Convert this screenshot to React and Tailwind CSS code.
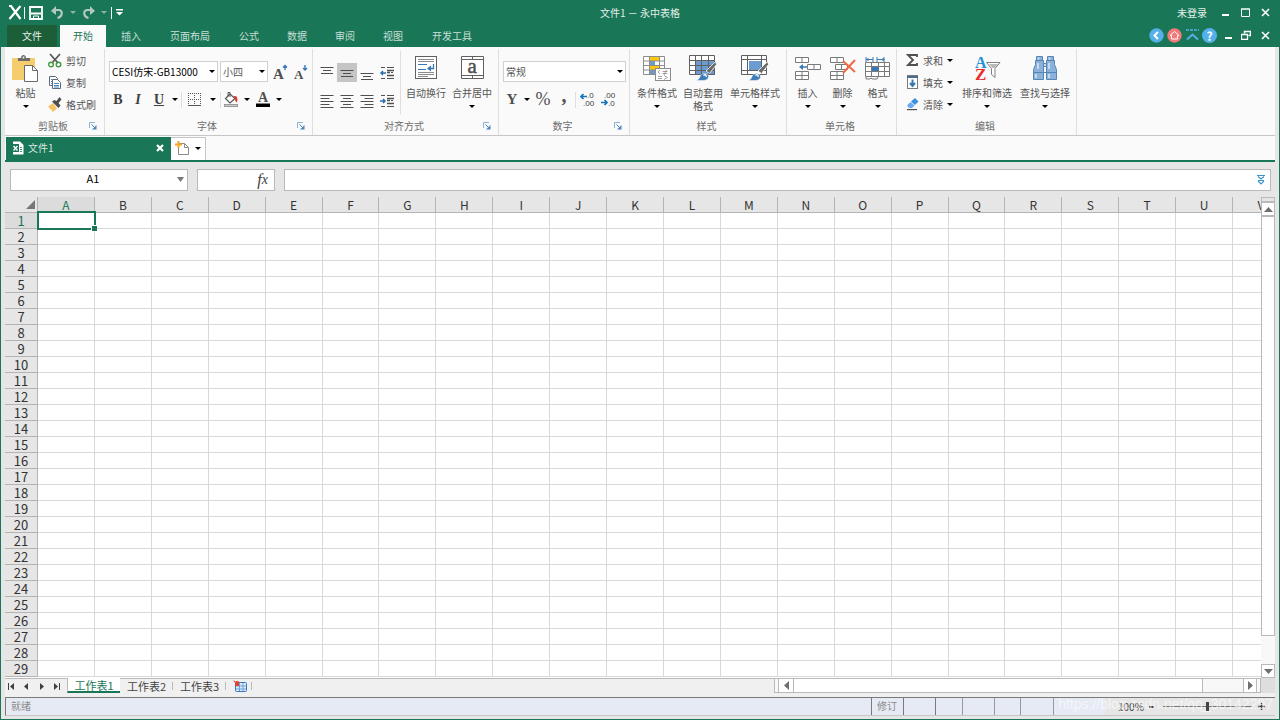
import { useState } from 'react'

const MENU_TABS = ['插入', '页面布局', '公式', '数据', '审阅', '视图', '开发工具']
const COLUMNS = 'ABCDEFGHIJKLMNOPQRSTUV'.split('')
const ROWS = Array.from({ length: 29 }, (_, i) => i + 1)
const SHEETS = ['工作表1', '工作表2', '工作表3']

const Caret = ({ className = 'text-black' }) => (
    <svg width="6" height="3" viewBox="0 0 6 3" className={`shrink-0 ${className}`}>
        <path d="M0 0h6L3 3z" fill="currentColor" />
    </svg>
)

const Triangle = ({ d }) => (
    <svg width="9" height="9" viewBox="0 0 9 9" className="text-[#6e6e6e]">
        <path d={d} fill="currentColor" />
    </svg>
)

/* ---------- Icons ---------- */

const PasteIcon = () => (
    <svg width="27" height="27" viewBox="0 0 27 27" fill="none">
        <rect x="0" y="3" width="23" height="22" rx="1" fill="#f5cd6c" />
        <path d="M6 6V3h3c0-4 5-4 5 0h4v3z" fill="#6b6b6b" />
        <circle cx="11.5" cy="2.6" r="1" fill="#fafafa" />
        <path d="M12.5 10.5h8l5 5v11h-13z" fill="#fff" stroke="#6b6b6b" />
        <path d="M20.5 10.5v5h5" stroke="#6b6b6b" />
    </svg>
)

const CutIcon = () => (
    <svg width="14" height="15" viewBox="0 0 14 15" fill="none">
        <path d="M2 1l8 9M12 1L4 10" stroke="#5a5a5a" strokeWidth="1.8" />
        <circle cx="3" cy="11.5" r="2.3" stroke="#3f9b3f" strokeWidth="1.4" />
        <circle cx="10.5" cy="11.5" r="2.3" stroke="#3f9b3f" strokeWidth="1.4" />
    </svg>
)

const CopyIcon = () => (
    <svg width="14" height="15" viewBox="0 0 14 15" fill="none">
        <path d="M1.5 1.5h6l2 2v7h-8z" fill="#fff" stroke="#5f6b7a" />
        <path d="M4.5 4.5h5l3 3v6h-8z" fill="#fff" stroke="#5f6b7a" />
        <path d="M6 8.500h5M6 10.5h5M6 12h5M3 4.5h1M3 6.5h1M3 8.5h1" stroke="#4a84c4" />
    </svg>
)

const BrushIcon = () => (
    <svg width="14" height="15" viewBox="0 0 14 15">
        <path d="M0 9.500L5 6l4 5.500L5 15z" fill="#f5c465" />
        <path d="M4 4.500l2.500-1.500 2 1L11.500 0 13.500 2.500 10.500 6l2 2.500-2 2.500z" fill="#4d4d4d" />
    </svg>
)

const FontSizeIcon = ({ up }) => (
    <svg width="15" height="16" viewBox="0 0 15 16" fill="none">
        <text x="0" y="15" fontSize={up ? 15 : 13} fontWeight="bold" fill="#505050" className="font-['Liberation_Serif',serif]">A</text>
        <path d={up ? 'M12 6V1.500M10 3.500l2-2 2 2' : 'M11 1v5M9 4l2 2 2-2'} stroke="#3a78b5" strokeWidth="1.4" />
    </svg>
)

const BorderIcon = () => (
    <svg width="13" height="13" viewBox="0 0 13 13" fill="none" stroke="#555">
        <path d="M.5 0v12M6.5 0v12M12.5 0v12M0 .5h13M0 6.5h13" strokeDasharray="1 1" />
        <path d="M0 12.5h13" />
    </svg>
)

const FillIcon = () => (
    <svg width="15" height="15" viewBox="0 0 15 15" fill="none">
        <path d="M1.500 6.500L6 2l5 4.500-5 4.500z" fill="#fff" stroke="#555" strokeWidth="1.2" />
        <path d="M4 4.500V.5h2V5" stroke="#555" />
        <path d="M9.500 4c4-.5 4.500 2 3.500 6.500-1.500-.5-2.500-3-2-4.500z" fill="#e23b32" />
        <rect x=".5" y="12.5" width="13" height="2" fill="#ccc" stroke="#999" />
    </svg>
)

const FontColorIcon = () => (
    <svg width="15" height="15" viewBox="0 0 15 15">
        <text x="2" y="10" fontSize="14" fontWeight="bold" fill="#505050" className="font-['Liberation_Serif',serif]">A</text>
        <rect y="11.500" width="14" height="3.500" fill="#000" />
    </svg>
)

const LinesIcon = ({ d }) => (
    <svg width="14" height="14" viewBox="0 0 14 14" fill="none" stroke="#505050">
        <path d={d} />
    </svg>
)

const IndentIcon = ({ right }) => (
    <svg width="15" height="14" viewBox="0 0 15 14" fill="none">
        <path d="M1 1.5h4M7 1.5h7M1 12.5h4M7 12.5h7M11 6.5h2" stroke="#505050" />
        <path d="M7 4.500h7M7 6.5h3M7 9.500h7" stroke="#505050" strokeWidth="1.6" />
        <path d={right ? 'M0 7h5M3 5l2 2-2 2' : 'M6 7H1M3 5L1 7l2 2'} stroke="#2d6db0" strokeWidth="1.5" />
    </svg>
)

const WrapIcon = () => (
    <svg width="22" height="24" viewBox="0 0 22 24" fill="none">
        <rect x=".5" y=".5" width="21" height="22" fill="#fff" stroke="#606060" />
        <path d="M3 3.5h16M3 5.5h16M3 16.5h16M3 18.5h16M3 20.5h10" stroke="#8a8a8a" />
        <path d="M3 8.5h9M3 13.5h8" stroke="#3a78b5" />
        <path d="M18.5 8v4.5h-5" stroke="#3a78b5" strokeWidth="1.3" />
        <path d="M16 9.5v6l-4-3z" fill="#3a78b5" />
    </svg>
)

const MergeIcon = () => (
    <svg width="23" height="24" viewBox="0 0 23 24" fill="none">
        <path d="M.5.5h22v22H.5zM.5 3.5h22M.5 19.5h22M11.5.5v3M11.5 19.5v3" fill="#fff" stroke="#606060" />
        <text x="6.5" y="17" fontSize="21" fill="#505050" stroke="#505050" strokeWidth=".5" className="font-['Liberation_Serif',serif]">a</text>
    </svg>
)

const DecimalIcon = ({ more }) => (
    <svg width="15" height="15" viewBox="0 0 15 15" fill="none">
        <text x={more ? 7 : 3} y="6" fontSize="8" fill="#404040" className="font-['Liberation_Sans',sans-serif]">{more ? '.0' : '.00'}</text>
        <text x={more ? 3 : 7} y="14" fontSize="8" fill="#404040" className="font-['Liberation_Sans',sans-serif]">{more ? '.00' : '.0'}</text>
        <path d={more ? 'M7 4.500H1M3.500 2L1 4.500 3.500 7' : 'M0 10.500h6M3.500 8L6 10.500 3.500 13'} stroke="#1673b8" strokeWidth="1.7" />
    </svg>
)

const ConditionIcon = () => (
    <svg width="28" height="27" viewBox="0 0 28 27" fill="none">
        <rect x=".5" y="1.5" width="22" height="18" fill="#fff" />
        <path d="M6 2h11v4H6zM6 11h10v4H6z" fill="#fcc80f" />
        <path d="M6 6h6v5H6zM6 15h6v4H6z" fill="#6b9bc9" />
        <path d="M.5 1.5h21v18H.5zM.5 6h21M.5 10.5h21M.5 15h21M6.5 1.5v18M16.5 1.5v18" stroke="#8c8c8c" />
        <rect x="12.5" y="13.5" width="15" height="12" fill="#fff" stroke="#8c8c8c" />
        <path d="M17 15l-2 2 2 2M19.5 16.5h5M19.5 18.5h5M23.5 15L21 20M15 21.5h4M15 23.5h4M21 20.500l3.500 2-3.500 2" stroke="#8c8c8c" strokeWidth=".8" />
    </svg>
)

const StyleBrush = () => (
    <>
        <path d="M26.500 6.500l1 3-7 9-3.500-2.500z" fill="#6b6b6b" stroke="#fafafa" strokeWidth=".8" />
        <path d="M7 25.500c4-1 3-3.500 5.500-6 2.500-2 6.500-1 7 1.500.5 3-2.500 4.500-5.500 4.500z" fill="#3f7db8" stroke="#fafafa" strokeWidth=".5" />
        <path d="M14.500 20.500c1-1.500 3.500-.5 2.500 1.500" stroke="#fff" strokeWidth="1.3" />
    </>
)

const AutoFormatIcon = () => (
    <svg width="29" height="27" viewBox="0 0 29 27" fill="none">
        <path d="M.5.5h25v19H.5z" fill="#fff" />
        <path d="M7 6h19v14H7z" fill="#6b9bd0" />
        <path d="M.5.5h25v19H.5zM.5 5.5h25M.5 10.5h25M.5 15.5h25M6.500.5v19M12.500.5v19M19.500.5v19" stroke="#606060" />
        <StyleBrush />
    </svg>
)

const CellStyleIcon = () => (
    <svg width="29" height="27" viewBox="0 0 29 27" fill="none">
        <path d="M.5.5h25v19H.5z" fill="#fff" />
        <path d="M.5.5h25v19H.5zM.5 4.5h25M.5 15.5h25M6.500.5v19M20.500.5v19" stroke="#606060" />
        <path d="M8 6h12v9H8z" fill="#6b9bd0" />
        <StyleBrush />
    </svg>
)

const InsertIcon = () => (
    <svg width="26" height="25" viewBox="0 0 26 25" fill="none">
        <path d="M.5 1.5h13v5H.5zM7 1.5v5M12.5 8.5h13v5h-13zM19 8.5v5M.5 15.5h13v8H.5zM7 15.5v8M.5 19.5h13" fill="#fff" stroke="#7a7a7a" />
        <path d="M12 11H6" stroke="#3a78b5" strokeWidth="1.5" />
        <path d="M8 8v6l-4-3z" fill="#3a78b5" />
    </svg>
)

const DeleteIcon = () => (
    <svg width="26" height="25" viewBox="0 0 26 25" fill="none">
        <path d="M.5 1.5h13v5H.5zM7 1.5v5M5.5 8.5h12v5h-12zM11.5 8.5v5M.5 15.5h13v8H.5zM7 15.5v8M.5 19.5h13" fill="#fff" stroke="#7a7a7a" />
        <path d="M13 5l12 11M25 4L13 17" stroke="#f26a45" strokeWidth="2" />
    </svg>
)

const FormatIcon = () => (
    <svg width="26" height="25" viewBox="0 0 26 25" fill="none">
        <path d="M1 1v5M8 1v5M12 1v5M19 1v5M1 3.5h7M12 3.5h7M3.500 2L2 3.500 3.500 5M17.500 2L19 3.500 17.500 5" stroke="#3a78b5" />
        <path d="M.5 6.5h24v14H.5zM.5 10.5h24M.5 15.5h24M6.5 6.5v14M13.5 6.5v14M19.5 6.5v14" fill="#fff" stroke="#7a7a7a" />
        <path d="M7 11h6.500v4H7z" fill="#3a78b5" />
        <path d="M1 21v2h4l1-1 1 1h5l1-2" stroke="#7a7a7a" />
    </svg>
)

const SumIcon = () => (
    <svg width="13" height="14" viewBox="0 0 13 14" fill="none">
        <path d="M11 4V2H2l5 5-5 5h9v-2" stroke="#505050" strokeWidth="1.8" />
    </svg>
)

const FillDownIcon = () => (
    <svg width="13" height="14" viewBox="0 0 13 14" fill="none">
        <rect x="1.5" y=".5" width="10" height="13" fill="#fff" stroke="#7a7a7a" />
        <path d="M1 2h11" stroke="#4b6b8a" strokeWidth="2" />
        <path d="M6.5 4.5V10M4 8l2.500 3L9 8" stroke="#3a78b5" strokeWidth="2" />
    </svg>
)

const EraserIcon = () => (
    <svg width="13" height="14" viewBox="0 0 13 14">
        <path d="M9 1l3.500 3.500L9 8 5 4.500z" fill="#3f8fe0" />
        <path d="M4.500 5L8.500 8.500 6 11H3L1 8.500z" fill="#6aaaf0" />
        <path d="M1 12h10v1.200H1z" fill="#505050" />
    </svg>
)

const SortFilterIcon = () => (
    <svg width="27" height="26" viewBox="0 0 27 26" fill="none">
        <text x="1" y="13" fontSize="16" fontWeight="bold" fill="#2290d8" className="font-['Liberation_Serif',serif]">A</text>
        <text x="1" y="25" fontSize="17" fontWeight="bold" fill="#ee2b2b" className="font-['Liberation_Serif',serif]">Z</text>
        <path d="M12.5 7.5h13.500l-5 6v9l-3.500-3v-6z" fill="#fff" stroke="#808080" />
        <path d="M15 9h9l-3.500 4h-2z" fill="#b9b9b9" />
    </svg>
)

const BinocularsIcon = () => (
    <svg width="24" height="25" viewBox="0 0 24 25" stroke="#5585b5">
        <path d="M3.5.5h6v4h1v19H.5v-10l2-5v-4h1zM14.5.5h6v4h1v4l2 5v10h-10v-19h1z" fill="#8db2da" />
        <path d="M10.5 7.500h3v3h-3zM10.5 16.500h3" fill="#cfe0f2" />
        <path d="M3 4.500h7M14 4.500h7M1 16.500h9M14 16.500h9" />
        <path d="M3 18v4M16 18v4M5 7v6M16 7v6M5.500 1.500v2M16.500 1.500v2" stroke="#d8e7f7" strokeWidth="1.5" />
    </svg>
)

/* ---------- Ribbon parts ---------- */

const Group = ({ label, width, launcher, children }) => (
    <section aria-label={label} className={`flex shrink-0 flex-col ${width}`}>
        <div className="flex min-h-0 flex-1 border-r border-[#dedede]">{children}</div>
        <div className="flex h-[19px] items-center border-r border-[#dedede] pr-[7px] text-[#6d6d6d]">
            <span className="flex-1 pl-3 text-center">{label}</span>
            {launcher ? (
                <button aria-label={`${label}设置`} className="text-[#4a84c4]">
                    <svg width="8" height="8" viewBox="0 0 8 8" fill="none">
                        <path d="M.5 6V.5H6" stroke="#8fb2d6" />
                        <path d="M2.500 2.500l3 3" stroke="currentColor" />
                        <path d="M7.500 3v4.500H3z" fill="currentColor" />
                    </svg>
                </button>
            ) : <span className="w-2" />}
        </div>
    </section>
)

const BigButton = ({ icon, label, second, width, caret = true }) => (
    <button className={`flex shrink-0 flex-col items-center justify-start pt-[5px] ${width}`}>
        <span className="flex h-7 items-center justify-center">{icon}</span>
        <span className="mt-1 whitespace-nowrap leading-[13px]">{label}</span>
        {second && <span className="leading-[13px]">{second}</span>}
        {!second && caret && <span className="flex h-3.5 items-center"><Caret /></span>}
    </button>
)

const SmallButton = ({ icon, label, caret }) => (
    <button className="flex h-[22px] items-center gap-1 whitespace-nowrap">
        {icon}
        {label}
        {caret && <Caret />}
    </button>
)

const Combo = ({ label, value, className, text = '' }) => (
    <div className={`relative ${className}`}>
        <select aria-label={label} className={`block h-[21px] w-full appearance-none border border-[#d0d0d0] bg-white pl-0.5 pr-2 ${text}`}>
            <option>{value}</option>
        </select>
        <span className="pointer-events-none absolute right-[3px] top-[9px]"><Caret /></span>
    </div>
)

const IconButton = ({ label, children, className = 'w-5' }) => (
    <button aria-label={label} className={`flex h-[19px] shrink-0 items-center justify-center ${className}`}>
        {children}
    </button>
)

const Divider = () => <span className="h-4 w-px shrink-0 bg-[#dedede]" />

const Ribbon = () => (
    <div className="flex h-[89px] shrink-0 overflow-hidden border-b border-[#c6c6c6] bg-[#fafafa] pt-0.5 text-[#555]">
        <Group label="剪贴板" width="w-[100px]" launcher>
            <BigButton icon={<PasteIcon />} label="粘贴" width="w-[41px]" />
            <div className="ml-0.5 flex flex-col">
                <SmallButton icon={<CutIcon />} label="剪切" />
                <SmallButton icon={<CopyIcon />} label="复制" />
                <SmallButton icon={<BrushIcon />} label="格式刷" />
            </div>
        </Group>

        <Group label="字体" width="w-52" launcher>
            <div className="flex flex-col pl-1 pt-3">
                <div className="flex items-center gap-0.5">
                    <Combo label="字体" value="CESI仿宋-GB13000" className="w-[109px]" text="text-black" />
                    <Combo label="字号" value="小四" className="w-12" />
                    <IconButton label="增大字号"><FontSizeIcon up /></IconButton>
                    <IconButton label="减小字号" className="w-[18px]"><FontSizeIcon /></IconButton>
                </div>
                <div className="mt-2 flex items-center font-['Liberation_Serif',serif] text-[14px] text-[#404040]">
                    <IconButton label="加粗" className="w-[18px]"><b>B</b></IconButton>
                    <IconButton label="倾斜" className="w-[22px]"><i className="font-semibold">I</i></IconButton>
                    <IconButton label="下划线"><span className="font-bold underline">U</span></IconButton>
                    <IconButton label="下划线样式" className="w-3"><Caret /></IconButton>
                    <Divider />
                    <IconButton label="边框" className="w-6"><BorderIcon /></IconButton>
                    <IconButton label="边框样式" className="w-3.5"><Caret /></IconButton>
                    <Divider />
                    <IconButton label="填充颜色"><FillIcon /></IconButton>
                    <IconButton label="选择填充颜色" className="w-3"><Caret /></IconButton>
                    <IconButton label="字体颜色"><FontColorIcon /></IconButton>
                    <IconButton label="选择字体颜色" className="w-3"><Caret /></IconButton>
                </div>
            </div>
        </Group>

        <Group label="对齐方式" width="w-[186px]" launcher>
            <div className="my-0.5 flex flex-col gap-[9px] border-r border-[#dedede] pl-1 pr-[3px] pt-3">
                <div className="flex">
                    <IconButton label="顶端对齐"><LinesIcon d="M.5 1.5h13M3 4.5h8M1 7.5h12" /></IconButton>
                    <IconButton label="垂直居中" className="w-5 bg-[#c5c5c5]"><LinesIcon d="M.5 4.5h13M3 7.5h8M1 10.5h12" /></IconButton>
                    <IconButton label="底端对齐"><LinesIcon d="M.5 7.5h13M3 10.5h8M1 13.5h12" /></IconButton>
                    <IconButton label="减少缩进"><IndentIcon /></IconButton>
                </div>
                <div className="flex">
                    <IconButton label="左对齐"><LinesIcon d="M.5 1.5h13M.5 4.5h9M.5 7.5h13M.5 10.5h9M.5 13.5h13" /></IconButton>
                    <IconButton label="居中"><LinesIcon d="M.5 1.5h13M3 4.5h8M.5 7.5h13M3 10.5h8M.5 13.5h13" /></IconButton>
                    <IconButton label="右对齐"><LinesIcon d="M.5 1.5h13M4.5 4.5h9M.5 7.5h13M4.5 10.5h9M.5 13.5h13" /></IconButton>
                    <IconButton label="增加缩进"><IndentIcon right /></IconButton>
                </div>
            </div>
            <BigButton icon={<WrapIcon />} label="自动换行" width="w-[50px]" caret={false} />
            <BigButton icon={<MergeIcon />} label="合并居中" width="w-[42px]" />
        </Group>

        <Group label="数字" width="w-[131px]" launcher>
            <div className="flex flex-1 flex-col pl-1 pr-[3px] pt-3">
                <Combo label="数字格式" value="常规" className="w-full" />
                <div className="mt-2 flex items-center font-['Liberation_Serif',serif] text-[#505050]">
                    <IconButton label="货币" className="w-[18px] text-[15px] font-bold">Y</IconButton>
                    <IconButton label="货币样式" className="w-3"><Caret /></IconButton>
                    <IconButton label="百分比" className="w-5 text-[18px]">%</IconButton>
                    <IconButton label="千位分隔" className="w-[22px] text-[20px] font-bold"><span className="pb-2">,</span></IconButton>
                    <Divider />
                    <IconButton label="增加小数位" className="w-[22px]"><DecimalIcon more /></IconButton>
                    <IconButton label="减少小数位"><DecimalIcon /></IconButton>
                </div>
            </div>
        </Group>

        <Group label="样式" width="w-[157px]">
            <div className="flex pl-1">
                <BigButton icon={<ConditionIcon />} label="条件格式" width="w-[46px]" />
                <BigButton icon={<AutoFormatIcon />} label="自动套用" second="格式" width="w-[46px]" />
                <BigButton icon={<CellStyleIcon />} label="单元格样式" width="w-[58px]" />
            </div>
        </Group>

        <Group label="单元格" width="w-[110px]">
            <div className="flex pl-[3px]">
                <BigButton icon={<InsertIcon />} label="插入" width="w-[35px]" />
                <BigButton icon={<DeleteIcon />} label="删除" width="w-[35px]" />
                <BigButton icon={<FormatIcon />} label="格式" width="w-[35px]" />
            </div>
        </Group>

        <Group label="编辑" width="w-[180px]">
            <div className="flex w-[61px] shrink-0 flex-col pl-[9px]">
                <SmallButton icon={<SumIcon />} label="求和" caret />
                <SmallButton icon={<FillDownIcon />} label="填充" caret />
                <SmallButton icon={<EraserIcon />} label="清除" caret />
            </div>
            <BigButton icon={<SortFilterIcon />} label="排序和筛选" width="w-[58px]" />
            <BigButton icon={<BinocularsIcon />} label="查找与选择" width="w-[58px]" />
        </Group>
    </div>
)

/* ---------- Title bar and menu ---------- */

const MinimizeIcon = () => (
    <svg width="9" height="9" viewBox="0 0 9 9"><path d="M1 6h7v2H1z" fill="#fff" /></svg>
)

const CloseIcon = () => (
    <svg width="9" height="9" viewBox="0 0 9 9"><path d="M1 1l7 7M8 1L1 8" stroke="#fff" strokeWidth="1.6" /></svg>
)

const TitleBar = () => (
    <div className="relative flex h-[25px] items-center pl-2 pr-2.5 text-[#e4f0eb]">
        <svg width="14" height="15" viewBox="0 0 14 15" fill="none" stroke="#fff">
            <path d="M1 1h2l9.500 13M12.500 1L1.500 14" strokeWidth="2.2" />
        </svg>
        <span className="ml-0.5 h-3 w-px bg-white" />
        <button aria-label="保存" className="ml-1">
            <svg width="14" height="14" viewBox="0 0 14 14" fill="none">
                <path d="M1 1h12v12H1z" stroke="#fff" strokeWidth="1.8" />
                <path d="M2 7.500h10" stroke="#fff" strokeWidth="2" />
                <path d="M4.500 13v-3h5v3" stroke="#fff" />
            </svg>
        </button>
        <button aria-label="撤销" className="ml-2">
            <svg width="13" height="13" viewBox="0 0 13 13" fill="none">
                <path d="M3 4h4.500c4.500 0 4.500 6.500-1 8" stroke="#b4c7c0" strokeWidth="2.2" />
                <path d="M0 5l5-5v9z" fill="#b4c7c0" />
            </svg>
        </button>
        <button aria-label="撤销列表" className="ml-1.5"><Caret className="text-[#8fb0a4]" /></button>
        <button aria-label="恢复" className="ml-1.5">
            <svg width="13" height="13" viewBox="0 0 13 13" fill="none">
                <path d="M10 4H5.500C1 4 1 10.500 6.500 12" stroke="#b4c7c0" strokeWidth="2.2" />
                <path d="M13 5L8 0v9z" fill="#b4c7c0" />
            </svg>
        </button>
        <button aria-label="恢复列表" className="ml-1.5"><Caret className="text-[#8fb0a4]" /></button>
        <span className="ml-1 h-3 w-px bg-white" />
        <button aria-label="自定义快速访问工具栏" className="ml-1 text-white">
            <svg width="7" height="7" viewBox="0 0 7 7" fill="currentColor"><path d="M0 0h7v1.500H0zM0 3h7L3.500 6.500z" /></svg>
        </button>
        <h1 className="absolute inset-x-24 text-center">文件1 － 永中表格</h1>
        <button className="relative ml-auto">未登录</button>
        <button aria-label="最小化" className="ml-3.5"><MinimizeIcon /></button>
        <button aria-label="最大化" className="ml-[11px]">
            <svg width="9" height="9" viewBox="0 0 9 9" fill="none"><path d="M.5 1h8v7.500h-8zM0 1h9" stroke="#fff" /></svg>
        </button>
        <button aria-label="关闭" className="ml-[11px]"><CloseIcon /></button>
    </div>
)

const MenuBar = () => (
    <nav className="flex h-[22px] items-center pl-[7px] pr-2.5 text-[#c8dfd6]">
        <button className="h-full w-[50px] bg-[#1c5e37] pb-0.5 text-[#e4f0eb]">文件</button>
        <button className="ml-[3px] mr-px h-full w-[46px] bg-[#fafafa] pb-0.5 text-[#197656]">开始</button>
        {MENU_TABS.map((tab) => (
            <button key={tab} className={`h-full pb-0.5 text-center ${tab.length > 2 ? 'w-[70px]' : 'w-12'}`}>{tab}</button>
        ))}
        <div className="ml-auto flex items-center pb-0.5">
            <button aria-label="返回">
                <svg width="15" height="15" viewBox="0 0 15 15" fill="none">
                    <circle cx="7.5" cy="7.5" r="7.2" fill="#55b0ea" />
                    <path d="M9 4L5.500 7.500 9 11" stroke="#fff" strokeWidth="2" />
                </svg>
            </button>
            <button aria-label="主页" className="ml-[3px]">
                <svg width="15" height="15" viewBox="0 0 15 15" fill="none">
                    <circle cx="7.5" cy="7.5" r="7.2" fill="#f5797b" />
                    <path d="M3 7.500l4.500-4 4.500 4h-1.500V11h-6V7.500z" stroke="#fff" />
                </svg>
            </button>
            <button aria-label="折叠功能区" className="ml-1">
                <svg width="13" height="12" viewBox="0 0 13 12" fill="none" stroke="#55b0ea">
                    <path d="M0 1h13" strokeWidth="1.5" strokeDasharray="3 1" />
                    <path d="M1 10.500L6.500 5.500l5.500 5" strokeWidth="2" />
                </svg>
            </button>
            <button aria-label="帮助" className="ml-[3px] size-[15px] rounded-full bg-[#55b0ea] text-[12px] font-bold leading-[15px] text-white">?</button>
            <button aria-label="最小化文档" className="ml-[7px]"><MinimizeIcon /></button>
            <button aria-label="还原文档" className="ml-2">
                <svg width="10" height="10" viewBox="0 0 10 10" fill="none" stroke="#fff">
                    <path d="M3.500 3.500v-2h6v4h-2" strokeWidth="1.5" />
                    <path d="M.5 4.500h6v5h-6z" strokeWidth="1.3" />
                </svg>
            </button>
            <button aria-label="关闭文档" className="ml-2.5"><CloseIcon /></button>
        </div>
    </nav>
)

/* ---------- Document tab and formula bar ---------- */

const DocumentTabs = () => (
    <div className="flex h-[26px] shrink-0 items-stretch border-b-2 border-[#197656] bg-[#fafafa] pl-px pt-px">
        <div className="flex w-[165px] items-center bg-[#197656] pl-1.5 pr-[7px] pb-0.5 text-[#d8e8e2]">
            <svg width="12" height="14" viewBox="0 0 12 14" fill="none">
                <path d="M1 .5h7l3.500 3.500v9.500H1z" fill="#fff" />
                <path d="M0 3h7v8H0z" fill="#197656" />
                <path d="M1.500 5l4 4.500M5.500 5l-4 4.500" stroke="#fff" strokeWidth="1.4" />
                <path d="M8 6.500h2M8 8.500h2M8 10.500h2" stroke="#197656" strokeWidth=".8" />
            </svg>
            <span className="ml-1">文件1</span>
            <button aria-label="关闭文件1" className="ml-auto">
                <svg width="8" height="8" viewBox="0 0 8 8"><path d="M1 1l6 6M7 1L1 7" stroke="#fff" strokeWidth="2.2" /></svg>
            </button>
        </div>
        <button aria-label="新建文件" className="flex w-[35px] items-center justify-between border border-l-0 border-b-0 border-[#c6c6c6] bg-white px-1 pb-0.5">
            <svg width="15" height="15" viewBox="0 0 15 15" fill="none">
                <path d="M3.5 2.5h6l4 4v7h-10z" fill="#fff" stroke="#8a8a8a" />
                <path d="M9.5 2.5v4h4" stroke="#8a8a8a" />
                <path d="M3.5 0v7M0 3.5h7" stroke="#f5a623" strokeWidth="2" />
            </svg>
            <Caret />
        </button>
    </div>
)

const FormulaBar = () => (
    <div className="flex h-[35px] shrink-0 items-center bg-[#e6e6e6] pl-[5px] pr-1">
        <div className="relative w-[178px]">
            <input aria-label="名称框" defaultValue="A1" className="block h-[22px] w-full border border-[#b9b9b9] bg-white pb-1 pr-3 text-center text-[11px] text-black" />
            <button aria-label="名称列表" className="absolute right-1 top-2">
                <svg width="7" height="5" viewBox="0 0 7 5"><path d="M0 0h7L3.500 5z" fill="#777" /></svg>
            </button>
        </div>
        <button aria-label="插入函数" className="ml-[9px] flex h-[22px] w-[78px] items-center justify-end border border-[#b9b9b9] bg-white pr-1.5 font-['Liberation_Serif',serif] text-[16px] italic text-[#404040]">
            f<span className="text-[14px]">x</span>
        </button>
        <div className="relative ml-[9px] flex-1">
            <input aria-label="编辑栏" className="block h-[22px] w-full border border-[#b9b9b9] bg-white px-1 text-[11px]" />
            <button aria-label="展开编辑栏" className="absolute right-1.5 top-1.5">
                <svg width="8" height="10" viewBox="0 0 8 10" fill="none" stroke="#3f95c9">
                    <path d="M0 .5h8M1 1.500l3 2.500 3-2.500" strokeWidth="1.2" />
                    <path d="M1 5.500h6M1 6l3 3 3-3" strokeWidth="1.2" />
                </svg>
            </button>
        </div>
    </div>
)

/* ---------- Grid ---------- */

const SheetGrid = () => (
    <div className="min-w-0 flex-1 overflow-hidden bg-white">
        <table className="w-full min-w-[1285px] table-fixed border-separate border-spacing-0 text-[13px] leading-[15px] text-[#333]">
            <thead>
                <tr className="h-4">
                    <th className="h-4 w-[33px] border-b border-r border-[#b4b4b4] bg-[#e6e6e6] p-0">
                        <svg width="9" height="9" viewBox="0 0 9 9" className="ml-auto mr-0.5"><path d="M9 0v9H0z" fill="#777" /></svg>
                    </th>
                    {COLUMNS.map((col) => (
                        <th
                            key={col}
                            scope="col"
                            className={`h-4 border-b border-r border-[#b4b4b4] p-0 text-[12px] font-normal ${col === 'A' ? 'bg-[#dcdcdc] text-[#197656]' : 'bg-[#e6e6e6]'}`}
                        >
                            {col}
                        </th>
                    ))}
                </tr>
            </thead>
            <tbody>
                {ROWS.map((row) => (
                    <tr key={row} className="h-4">
                        <th
                            scope="row"
                            className={`h-4 border-b border-r border-[#b4b4b4] p-0 font-normal ${row === 1 ? 'bg-[#dcdcdc] text-[#197656]' : 'bg-[#e6e6e6]'}`}
                        >
                            {row}
                        </th>
                        {COLUMNS.map((col) => (
                            <td key={col} className="relative h-4 border-b border-r border-[#d9d9d9] p-0">
                                {row === 1 && col === 'A' && (
                                    <div className="absolute -bottom-0.5 -left-px -right-0.5 -top-0.5 z-10 border-2 border-[#197656]">
                                        <span className="absolute -bottom-[3px] -right-[3px] size-[6px] border-l border-t border-white bg-[#197656]" />
                                    </div>
                                )}
                            </td>
                        ))}
                    </tr>
                ))}
            </tbody>
        </table>
    </div>
)

const VerticalScroll = () => (
    <div className="flex w-3.5 shrink-0 flex-col bg-[#f8f8f8]">
        <div className="h-[5px] shrink-0 border border-[#b9b9b9] bg-[#e6e6e6]" />
        <button aria-label="向上滚动" className="flex h-[14px] shrink-0 items-center justify-center border border-[#b9b9b9] bg-white"><Triangle d="M0 7h9L4.500 2z" /></button>
        <div className="flex-[420] border border-[#b9b9b9] bg-white" />
        <div className="flex-[28]" />
        <button aria-label="向下滚动" className="flex h-[14px] shrink-0 items-center justify-center border border-[#b9b9b9] bg-white"><Triangle d="M0 2h9L4.500 7z" /></button>
    </div>
)

const SHEET_NAV = [
    ['第一张', 'M1 1h1v7H1zM7 1v7L3 4.500z'],
    ['上一张', 'M6 1v7L2 4.500z'],
    ['下一张', 'M3 1v7l4-3.500z'],
    ['最后一张', 'M2 1v7l4-3.500zM7 1h1v7H7z'],
]

const SheetBar = ({ active, onSelect }) => (
    <div className="flex h-[19px] shrink-0 items-start bg-[#f0f0f0] text-[#444]">
        <div className="flex h-[15px] w-[62px] shrink-0 items-center justify-between border-t border-[#b9b9b9] pl-0.5 pr-1.5">
            {SHEET_NAV.map(([label, d]) => (
                <button key={label} aria-label={label}>
                    <svg width="9" height="9" viewBox="0 0 9 9"><path d={d} fill="#404040" /></svg>
                </button>
            ))}
        </div>
        {SHEETS.map((sheet) => (
            <button
                key={sheet}
                onClick={() => onSelect(sheet)}
                className={sheet === active
                    ? 'h-[15px] w-[53px] shrink-0 border-b-2 border-l border-b-[#197656] border-l-[#b9b9b9] bg-white text-[11px] leading-[12px] text-[#197656]'
                    : 'flex h-[15px] w-[53px] shrink-0 items-center justify-between border-t border-[#b9b9b9] pl-[7px] text-[11px] leading-[12px]'}
            >
                {sheet}
                {sheet !== active && <span className="h-2 w-px bg-[#b9b9b9]" />}
            </button>
        ))}
        <div className="flex h-[15px] flex-1 items-center gap-1 border-t border-[#b9b9b9] pl-[7px]">
            <button aria-label="插入工作表">
                <svg width="14" height="12" viewBox="0 0 14 12" fill="none">
                    <rect x="2.5" y="2.5" width="11" height="9" rx="1" fill="#dcebfa" stroke="#3a78c0" />
                    <path d="M3 6h10M3 9h10M6.5 3v8M10 3v8" stroke="#6fa0d8" />
                    <path d="M0 0l2.500 1.500L4 1l2 .500V6H1.500L3 4.500z" fill="#e8402c" />
                </svg>
            </button>
            <span className="h-2 w-px bg-[#b9b9b9]" />
        </div>
        <div className="flex h-[15px] w-[487px] shrink-0 border-y border-[#b9b9b9] bg-[#f8f8f8]">
            <div className="w-[5px] border-x border-[#b9b9b9]" />
            <button aria-label="向左滚动" className="flex w-3.5 items-center justify-center bg-white"><Triangle d="M7 0v9L2 4.500z" /></button>
            <div className="flex-[410] border-x border-[#b9b9b9] bg-white" />
            <div className="flex-[40]" />
            <button aria-label="向右滚动" className="flex w-3.5 items-center justify-center border-x border-[#b9b9b9] bg-white"><Triangle d="M2 0v9l5-4.500z" /></button>
            <div className="w-1 border-r border-[#b9b9b9]" />
        </div>
        <div className="h-[15px] w-3.5 shrink-0 bg-[#dedede]" />
    </div>
)

const StatusBar = () => (
    <footer className="relative flex h-[19px] shrink-0 items-stretch border-b border-l border-t border-b-[#c6c6c6] border-l-[#7a7a7a] border-t-[#7a7a7a] bg-[#e6eaf4] text-[#8a8a8a]">
        <span className="flex-1 pl-[5px] leading-[15px]">就绪</span>
        <span className="w-8 border-l border-[#7a7a7a] pl-[5px] leading-[15px]">修订</span>
        <span className="w-8 border-l border-[#7a7a7a]" />
        <span className="w-[27px] border-l border-[#7a7a7a]" />
        <span className="w-8 border-l border-[#9a9a9a]" />
        <span className="w-[26px] border-l border-[#9a9a9a]" />
        <span className="w-[33px] border-l border-[#9a9a9a]" />
        <span className="w-[52px] border-l border-[#9a9a9a]" />
        <div className="flex w-[170px] items-center bg-[#e6e6e6] pl-[13px] pr-2.5 text-[#444]">
            <span className="w-[31px]">100%</span>
            <button aria-label="缩小" className="flex h-full w-2 items-center">
                <svg width="5" height="2" viewBox="0 0 5 2"><path d="M0 0h5v2H0z" fill="#444" /></svg>
            </button>
            <input
                type="range"
                aria-label="显示比例"
                defaultValue="50"
                className="mx-1.5 h-3 min-w-0 flex-1 appearance-none bg-transparent [&::-webkit-slider-runnable-track]:h-px [&::-webkit-slider-runnable-track]:bg-[#777] [&::-webkit-slider-thumb]:-mt-1 [&::-webkit-slider-thumb]:h-[9px] [&::-webkit-slider-thumb]:w-[3px] [&::-webkit-slider-thumb]:appearance-none [&::-webkit-slider-thumb]:bg-[#444]"
            />
            <button aria-label="放大">
                <svg width="7" height="7" viewBox="0 0 7 7"><path d="M3.500 0v7M0 3.500h7" stroke="#444" strokeWidth="1.5" /></svg>
            </button>
        </div>
        <span className="pointer-events-none absolute -top-0.5 right-0.5 font-['Liberation_Sans',sans-serif] text-[14px] leading-[16px] text-white/60">
            https://blog.csdn.net/qq_30142297
        </span>
    </footer>
)

export default function App() {
    const [sheet, setSheet] = useState('工作表1')

    return (
        <div className="flex h-screen flex-col overflow-hidden border-b border-[#197656] bg-[#197656] font-['Noto_Sans_CJK_SC',sans-serif] text-[10px] leading-[13px]">
            <header className="shrink-0">
                <TitleBar />
                <MenuBar />
            </header>
            <main className="mx-px flex min-h-0 flex-1 flex-col bg-[#e6e6e6] pb-[3px] pl-1 pr-1">
                <Ribbon />
                <DocumentTabs />
                <FormulaBar />
                <div className="flex min-h-0 flex-1">
                    <SheetGrid />
                    <VerticalScroll />
                </div>
                <SheetBar active={sheet} onSelect={setSheet} />
                <StatusBar />
            </main>
        </div>
    )
}
